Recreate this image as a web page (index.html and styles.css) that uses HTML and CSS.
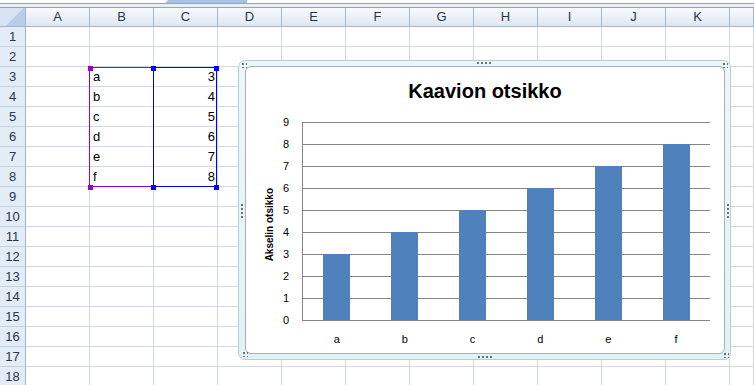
FILE: index.html
```html
<!DOCTYPE html>
<html lang="fi">
<head>
  <meta charset="UTF-8" />
  <title>Kaavio – Taulukko1</title>
  <link rel="stylesheet" href="styles.css">
</head>
<body>
  <!-- Kaavarivin alareuna -->
  <div class="topbar">
    <div class="strip"><span class="thumb"></span></div>
    <div class="band"></div>
  </div>

  <!-- Taulukko -->
  <div class="sheet">
    <div class="corner"></div><div class="ch">A</div><div class="ch">B</div><div class="ch">C</div><div class="ch">D</div><div class="ch">E</div><div class="ch">F</div><div class="ch">G</div><div class="ch">H</div><div class="ch">I</div><div class="ch">J</div><div class="ch">K</div><div class="ch"></div>
    <div class="rh">1</div><div></div><div></div><div></div><div></div><div></div><div></div><div></div><div></div><div></div><div></div><div></div><div></div>
    <div class="rh">2</div><div></div><div></div><div></div><div></div><div></div><div></div><div></div><div></div><div></div><div></div><div></div><div></div>
    <div class="rh">3</div><div></div><div class="l">a</div><div class="r">3</div><div></div><div></div><div></div><div></div><div></div><div></div><div></div><div></div><div></div>
    <div class="rh">4</div><div></div><div class="l">b</div><div class="r">4</div><div></div><div></div><div></div><div></div><div></div><div></div><div></div><div></div><div></div>
    <div class="rh">5</div><div></div><div class="l">c</div><div class="r">5</div><div></div><div></div><div></div><div></div><div></div><div></div><div></div><div></div><div></div>
    <div class="rh">6</div><div></div><div class="l">d</div><div class="r">6</div><div></div><div></div><div></div><div></div><div></div><div></div><div></div><div></div><div></div>
    <div class="rh">7</div><div></div><div class="l">e</div><div class="r">7</div><div></div><div></div><div></div><div></div><div></div><div></div><div></div><div></div><div></div>
    <div class="rh">8</div><div></div><div class="l">f</div><div class="r">8</div><div></div><div></div><div></div><div></div><div></div><div></div><div></div><div></div><div></div>
    <div class="rh">9</div><div></div><div></div><div></div><div></div><div></div><div></div><div></div><div></div><div></div><div></div><div></div><div></div>
    <div class="rh">10</div><div></div><div></div><div></div><div></div><div></div><div></div><div></div><div></div><div></div><div></div><div></div><div></div>
    <div class="rh">11</div><div></div><div></div><div></div><div></div><div></div><div></div><div></div><div></div><div></div><div></div><div></div><div></div>
    <div class="rh">12</div><div></div><div></div><div></div><div></div><div></div><div></div><div></div><div></div><div></div><div></div><div></div><div></div>
    <div class="rh">13</div><div></div><div></div><div></div><div></div><div></div><div></div><div></div><div></div><div></div><div></div><div></div><div></div>
    <div class="rh">14</div><div></div><div></div><div></div><div></div><div></div><div></div><div></div><div></div><div></div><div></div><div></div><div></div>
    <div class="rh">15</div><div></div><div></div><div></div><div></div><div></div><div></div><div></div><div></div><div></div><div></div><div></div><div></div>
    <div class="rh">16</div><div></div><div></div><div></div><div></div><div></div><div></div><div></div><div></div><div></div><div></div><div></div><div></div>
    <div class="rh">17</div><div></div><div></div><div></div><div></div><div></div><div></div><div></div><div></div><div></div><div></div><div></div><div></div>
    <div class="rh">18</div><div></div><div></div><div></div><div></div><div></div><div></div><div></div><div></div><div></div><div></div><div></div><div></div>
  </div>

  <!-- Tietoalueen valinta -->
  <div class="sel sel-cat"></div>
  <div class="sel sel-val"></div>
  <span class="hd hd-p" style="left:88px; top:66px"></span>
  <span class="hd hd-p" style="left:88px; top:185px"></span>
  <span class="hd hd-b" style="left:151px; top:66px"></span>
  <span class="hd hd-b" style="left:151px; top:185px"></span>
  <span class="hd hd-b" style="left:214px; top:66px"></span>
  <span class="hd hd-b" style="left:214px; top:185px"></span>

  <!-- Kaavio -->
  <div class="chart">
    <span class="grip grip-c" style="left:2px; top:1px"></span>
    <span class="grip grip-h" style="left:238px; top:1px"></span>
    <span class="grip grip-c" style="left:483px; top:1px"></span>
    <span class="grip grip-v" style="left:2px; top:143px"></span>
    <span class="grip grip-v" style="left:488px; top:143px"></span>
    <span class="grip grip-c" style="left:3px; top:290px"></span>
    <span class="grip grip-h" style="left:239px; top:295px"></span>
    <span class="grip grip-c" style="left:484px; top:291px"></span>

    <div class="chart-inner">
      <div class="chart-title">Kaavion otsikko</div>
      <div class="chart-body">
        <div class="axis-title"><span>Akselin otsikko</span></div>
        <div class="y-labels">
          <span>9</span><span>8</span><span>7</span><span>6</span><span>5</span>
          <span>4</span><span>3</span><span>2</span><span>1</span><span>0</span>
        </div>
        <div class="plot">
          <div class="cat"><div class="bar" style="height:66px"></div></div>
          <div class="cat"><div class="bar" style="height:88px"></div></div>
          <div class="cat"><div class="bar" style="height:110px"></div></div>
          <div class="cat"><div class="bar" style="height:132px"></div></div>
          <div class="cat"><div class="bar" style="height:154px"></div></div>
          <div class="cat"><div class="bar" style="height:176px"></div></div>
        </div>
        <div class="x-labels">
          <span>a</span><span>b</span><span>c</span><span>d</span><span>e</span><span>f</span>
        </div>
      </div>
    </div>
  </div>
</body>
</html>
```

FILE: styles.css
```css
:root {
  --grid: #d0d7e5;
  --head-line: #9eb6ce;
  --bar: #4f81bd;
  --axis: #868686;
  --purple: #9900cc;
  --blue: #0000ff;
}

body {
  margin: 0;
  width: 754px;
  height: 385px;
  overflow: hidden;
  position: relative;
  background: #fff;
  font-family: "Liberation Sans", Arial, sans-serif;
  color: #000;
}

/* formula bar edge */
.topbar .strip {
  height: 3px;
  display: flex;
  border-bottom: 1px solid #8ea5c4;
}

.thumb {
  margin-left: 165px;
  width: 82px;
  height: 3px;
  background: #a9c2e1;
  clip-path: polygon(3px 0, 100% 0, 100% 100%, 0 100%);
}

.topbar .band {
  height: 3px;
  background: #e6eef8;
  border-bottom: 1px solid #8ea5c4;
}

/* sheet grid */
.sheet {
  display: grid;
  grid-template-columns: 26px repeat(11, 64px) 1fr;
  grid-template-rows: 19px;
  grid-auto-rows: 20px;
  font-size: 13px;
}

.sheet > div {
  box-sizing: border-box;
  border-right: 1px solid var(--grid);
  border-bottom: 1px solid var(--grid);
  line-height: 19px;
  white-space: nowrap;
}

.sheet > .corner {
  background: linear-gradient(135deg, #d6e3f3 55%, #b9cde6 56%);
  border-right: 1px solid var(--head-line);
  border-bottom: 1px solid var(--head-line);
}

.sheet > .ch {
  background: linear-gradient(#f8fafd, #dfe7f2);
  border-right: 1px solid var(--head-line);
  border-bottom: 1px solid var(--head-line);
  text-align: center;
  line-height: 18px;
  color: #27374d;
}

.sheet > .rh {
  background: #e4ecf7;
  border-right: 1px solid var(--head-line);
  border-bottom: 1px solid #c3d1e2;
  text-align: center;
  color: #27374d;
}

.sheet > .l { padding-left: 3px; }
.sheet > .r { text-align: right; padding-right: 2px; }

/* range highlight */
.sel {
  position: absolute;
  top: 67px;
  height: 120px;
  box-sizing: border-box;
}

.sel-cat { left: 89px; width: 65px; border: 1px solid var(--purple); }
.sel-val { left: 153px; width: 64px; border: 1px solid var(--blue); }

.hd {
  position: absolute;
  width: 5px;
  height: 5px;
}

.hd-p { background: var(--purple); }
.hd-b { background: var(--blue); }

/* chart object */
.chart {
  position: absolute;
  left: 238px;
  top: 60px;
  width: 493px;
  height: 300px;
  box-sizing: border-box;
  padding: 5px 5px 5px 6px;
  border: 1px solid #bccbcf;
  border-radius: 7px;
  background: linear-gradient(#eaf8fa, #dff3f6);
}

.grip {
  position: absolute;
}

.grip-c {
  width: 6px;
  height: 6px;
  background: radial-gradient(circle, #6f6f6f 0 1px, transparent 1.2px) 0 0 / 4px 4px;
}

.grip-h {
  width: 14px;
  height: 2px;
  background: repeating-linear-gradient(to right, #6f6f6f 0 2px, transparent 2px 4px);
}

.grip-v {
  width: 2px;
  height: 14px;
  background: repeating-linear-gradient(to bottom, #6f6f6f 0 2px, transparent 2px 4px);
}

.chart-inner {
  height: 100%;
  box-sizing: border-box;
  border: 1px solid #a9aeb0;
  border-radius: 6px;
  background: #fff;
}

.chart-title {
  height: 44px;
  box-sizing: border-box;
  padding-top: 12px;
  text-align: center;
  font-weight: bold;
  font-size: 20px;
  line-height: 24px;
}

.chart-body {
  display: grid;
  grid-template-columns: 34px 9px 421px;
  grid-template-rows: 220px 16px;
}

.axis-title {
  display: flex;
  align-items: center;
  justify-content: flex-end;
  padding: 8px 4px 0 0;
}

.axis-title span {
  writing-mode: vertical-rl;
  transform: rotate(180deg);
  font-size: 10px;
  font-weight: bold;
  line-height: 12px;
}

.y-labels {
  display: flex;
  flex-direction: column;
  align-items: flex-end;
  font-size: 11px;
  line-height: 22px;
}

.plot {
  grid-column: 3;
  margin: 11px 0 0 13px;
  height: 199px;
  box-sizing: border-box;
  border-left: 1px solid var(--axis);
  padding-bottom: 1px;
  background: repeating-linear-gradient(to bottom, var(--axis) 0 1px, transparent 1px 22px);
  display: flex;
  align-items: flex-end;
}

.cat {
  flex: 1;
  display: flex;
  justify-content: center;
}

.bar {
  width: 27px;
  background: var(--bar);
}

.x-labels {
  grid-column: 3;
  margin-left: 14px;
  display: flex;
  font-size: 11px;
  line-height: 16px;
}

.x-labels span {
  flex: 1;
  text-align: center;
}
```
